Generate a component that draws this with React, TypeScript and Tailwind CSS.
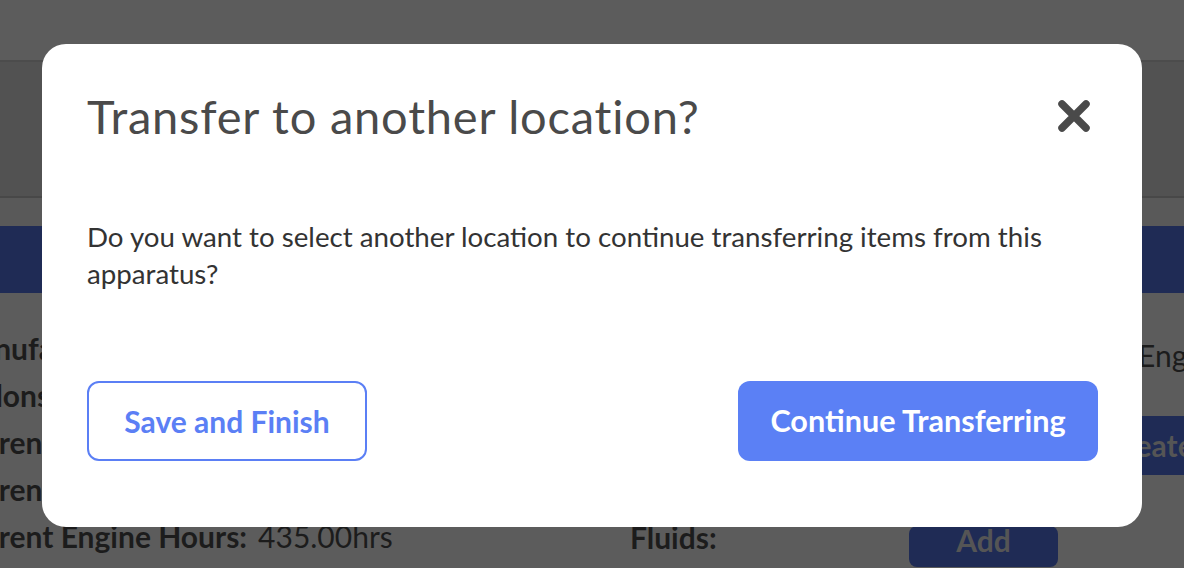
import React from "react";

function CloseIcon() {
  return (
    <svg width="34" height="34" viewBox="0 0 34 34" aria-hidden="true">
      <path d="M5 5 L29 29 M29 5 L5 29" stroke="#4a4a4a" strokeWidth="7.5" strokeLinecap="round" />
    </svg>
  );
}

export default function App() {
  const font = { fontFamily: "Lato, 'Open Sans', Arial, sans-serif" };
  return (
    <div className="relative w-[1184px] h-[568px] overflow-hidden bg-[#5c5c5c]" style={font}>
      {/* background page (dimmed) */}
      <div className="flex flex-col">
        <div className="h-[60px] bg-[#5c5c5c]" />
        <div className="h-[2px] bg-[#4c4c4c]" />
        <div className="h-[134px] bg-[#525252]" />
        <div className="h-[2px] bg-[#484848]" />
        <div className="h-[28px] bg-[#595959]" />
        <div className="h-[67px] bg-[#1f2b55]" />
        <div className="flex">
          <div className="ml-[-49px] w-[679px] shrink-0 mt-[39px] flex flex-col gap-[15px] text-[30px] leading-[32px] text-[#1c1c1c]">
            <div className="font-bold">Manufacturer:</div>
            <div className="font-bold">Gallons:</div>
            <div className="font-bold">Current Mileage:</div>
            <div className="font-bold">Current Location:</div>
            <div className="flex gap-[11px]">
              <span className="font-bold">Current Engine Hours:</span>
              <span>435.00hrs</span>
            </div>
          </div>
          <div className="flex flex-col w-[560px] shrink-0 mt-[46px]">
            <div className="ml-[508px] text-[30px] leading-[32px] text-[#1c1c1c] whitespace-nowrap">Engine</div>
            <div className="ml-[460px] mt-[45px] h-[59px] w-[140px] bg-[#1f2b55] rounded-[8px] flex items-center pl-[15px] text-[30px] font-bold text-[#555]">Create</div>
            <div className="flex items-start mt-[46px]">
              <div className="w-[279px] shrink-0 text-[30px] leading-[32px] font-bold text-[#1c1c1c]">Fluids:</div>
              <div className="mt-[5px] h-[41px] w-[149px] bg-[#1f2b55] rounded-[8px] flex items-start justify-center text-[30px] leading-[28px] font-bold text-[#555]">Add</div>
            </div>
          </div>
        </div>
      </div>

      {/* modal */}
      <div className="absolute inset-0 flex justify-center items-start pt-[44px]">
        <div className="w-[1100px] bg-white rounded-[24px] pt-[44px] pb-[66px] pl-[45px] pr-[44px]">
          <div className="flex items-center justify-between">
            <h2 className="text-[47px] leading-[56px] tracking-[0.8px] text-[#4a4a4a]">Transfer to another location?</h2>
            <div className="mr-[7px]">
              <CloseIcon />
            </div>
          </div>
          <p className="mt-[74px] text-[27.7px] leading-[37px] text-[#333333]">
            Do you want to select another location to continue transferring items from this apparatus?
          </p>
          <div className="mt-[89px] flex justify-between">
            <button className="w-[280px] h-[80px] rounded-[12px] border-2 border-[#5b7ff5] text-[#5b7ff5] text-[30px] font-bold bg-white">
              Save and Finish
            </button>
            <button className="w-[360px] h-[80px] rounded-[12px] bg-[#5b80f5] text-white text-[30.6px] font-bold">
              Continue Transferring
            </button>
          </div>
        </div>
      </div>
    </div>
  );
}
